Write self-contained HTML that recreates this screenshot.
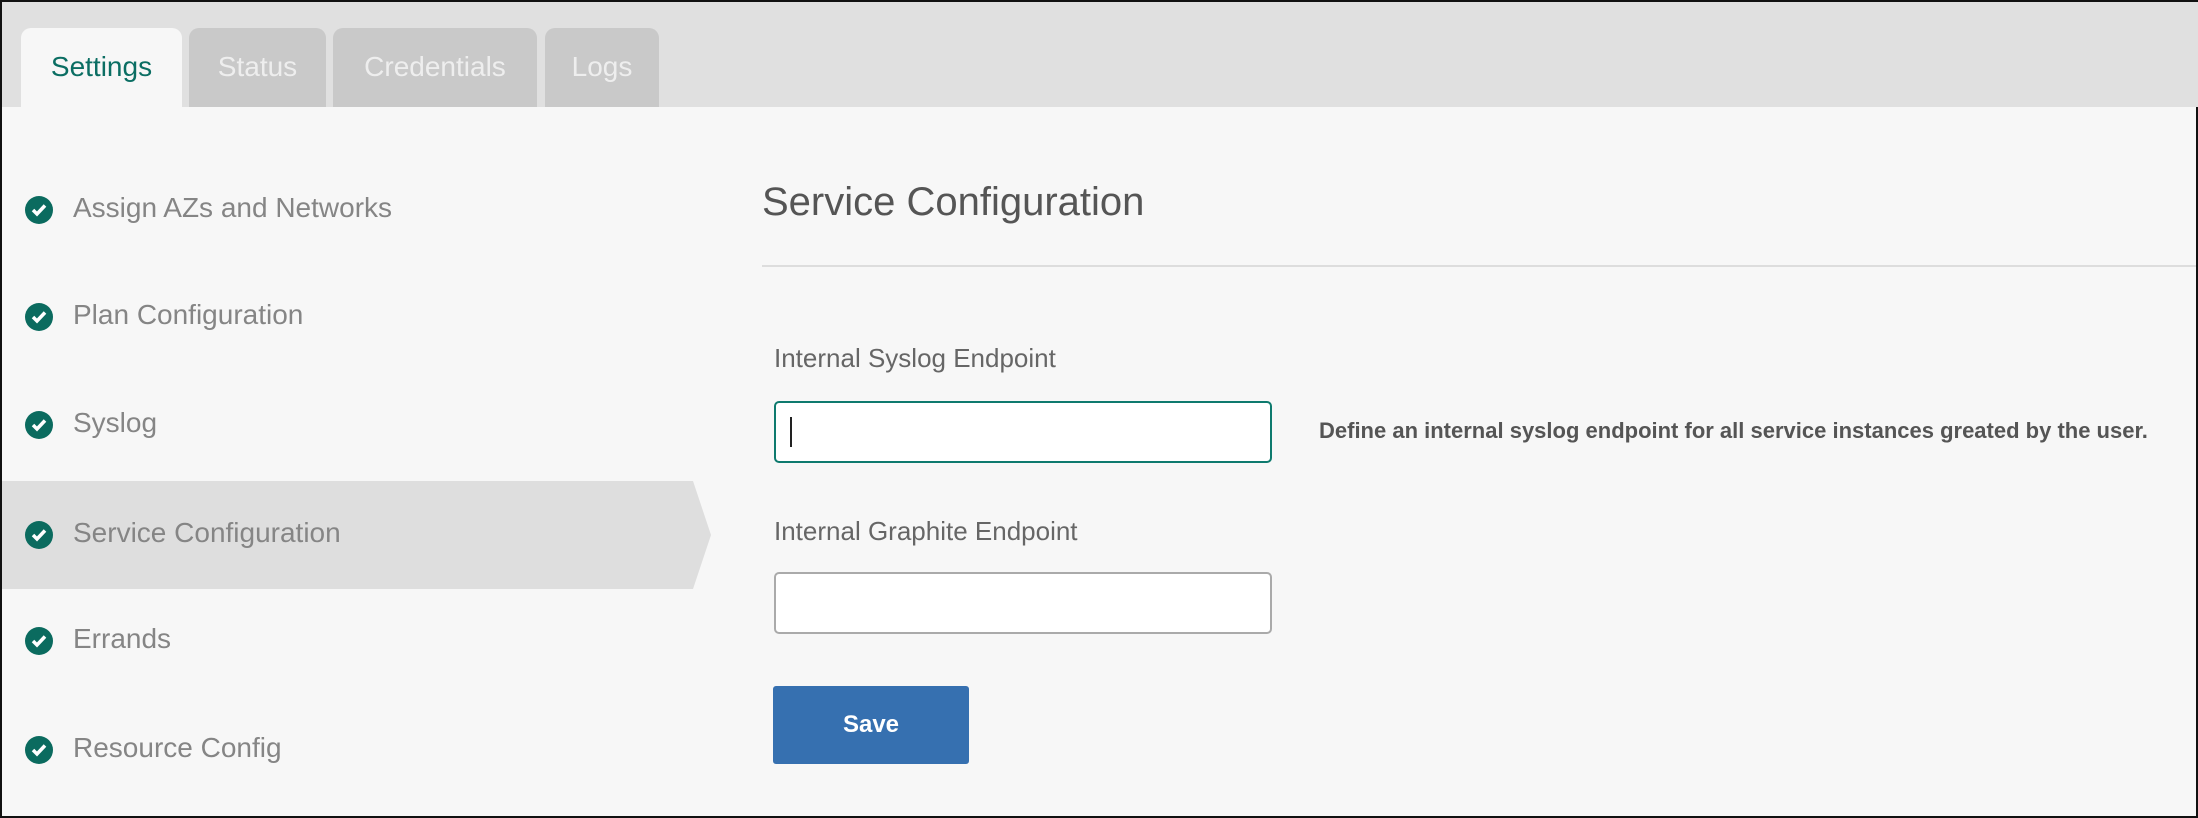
<!DOCTYPE html>
<html><head><style>
*{margin:0;padding:0;box-sizing:border-box}
body{width:2198px;height:818px;background:#f7f7f7;font-family:"Liberation Sans",sans-serif;position:relative;overflow:hidden;border:2px solid #111}
.hdr{position:absolute;left:0;top:0;width:2198px;height:105px;background:#e0e0e0}
.tab{position:absolute;top:26px;height:79px;background:#c9c9c9;border-radius:10px 10px 0 0;color:#eee;font-size:28px;text-align:center;line-height:78px}
.tab.on{background:#f7f7f7;color:#0b6e63}
.item{position:absolute;left:0;width:712px;height:108px}
.item .ic{position:absolute;left:23px;top:40px;width:28px;height:28px;border-radius:50%;background:#0b6b5f}
.item .ic svg{position:absolute;left:6px;top:7px}
.item .t{position:absolute;left:71px;top:36px;font-size:28px;color:#858585}
.act{background:#dedede;clip-path:polygon(0 0,691px 0,709px 54px,691px 108px,0 108px)}
h1{position:absolute;left:760px;top:178px;font-size:40px;font-weight:normal;color:#555}
.line{position:absolute;left:760px;top:263px;right:0;height:2px;background:#ddd}
.lab{position:absolute;left:772px;font-size:26px;color:#666}
.inp{position:absolute;left:772px;width:498px;height:62px;background:#fff;border:2px solid #aaa;border-radius:5px}
.btn{position:absolute;left:771px;top:684px;width:196px;height:78px;background:#3670b0;border-radius:3px;color:#fff;font-weight:bold;font-size:24px;text-align:center;line-height:78px}
</style></head><body>
<div class="hdr"></div>
<div class="tab on" style="left:19px;width:161px">Settings</div>
<div class="tab" style="left:187px;width:137px">Status</div>
<div class="tab" style="left:331px;width:204px">Credentials</div>
<div class="tab" style="left:543px;width:114px">Logs</div>

<div class="item" style="top:154px"><div class="ic"><svg width="16" height="14"><path d="M2 7l4 4L14 2.5" stroke="#fff" stroke-width="3.5" fill="none"/></svg></div><div class="t">Assign AZs and Networks</div></div>
<div class="item" style="top:261px"><div class="ic"><svg width="16" height="14"><path d="M2 7l4 4L14 2.5" stroke="#fff" stroke-width="3.5" fill="none"/></svg></div><div class="t">Plan Configuration</div></div>
<div class="item" style="top:369px"><div class="ic"><svg width="16" height="14"><path d="M2 7l4 4L14 2.5" stroke="#fff" stroke-width="3.5" fill="none"/></svg></div><div class="t">Syslog</div></div>
<div class="item act" style="top:479px"><div class="ic"><svg width="16" height="14"><path d="M2 7l4 4L14 2.5" stroke="#fff" stroke-width="3.5" fill="none"/></svg></div><div class="t">Service Configuration</div></div>
<div class="item" style="top:585px"><div class="ic"><svg width="16" height="14"><path d="M2 7l4 4L14 2.5" stroke="#fff" stroke-width="3.5" fill="none"/></svg></div><div class="t">Errands</div></div>
<div class="item" style="top:694px"><div class="ic"><svg width="16" height="14"><path d="M2 7l4 4L14 2.5" stroke="#fff" stroke-width="3.5" fill="none"/></svg></div><div class="t">Resource Config</div></div>

<h1>Service Configuration</h1>
<div class="line"></div>
<div class="lab" style="top:341px">Internal Syslog Endpoint</div>
<div class="inp" style="top:399px;border-color:#0e7a6e"><div style="position:absolute;left:14px;top:14px;width:2px;height:30px;background:#222"></div></div>
<div style="position:absolute;left:1317px;top:416px;font-size:22px;font-weight:bold;color:#555">Define an internal syslog endpoint for all service instances greated by the user.</div>
<div class="lab" style="top:514px">Internal Graphite Endpoint</div>
<div class="inp" style="top:570px"></div>
<div class="btn">Save</div>
</body></html>
